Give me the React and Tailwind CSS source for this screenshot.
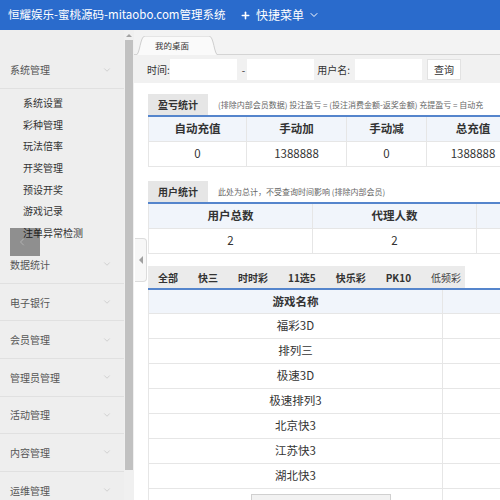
import { ChevronDown, ChevronLeft, Plus } from 'lucide-react'

const subs = ['系统设置', '彩种管理', '玩法倍率', '开奖管理', '预设开奖', '游戏记录', '注单异常检测']
const menus = ['数据统计', '电子银行', '会员管理', '管理员管理', '活动管理', '内容管理', '运维管理']
const tabs = ['全部', '快三', '时时彩', '11选5', '快乐彩', 'PK10', '低频彩']
const games = ['福彩3D', '排列三', '极速3D', '极速排列3', '北京快3', '江苏快3', '湖北快3']

function MenuRow({ label, tall }) {
  return (
    <div
      className={`flex items-center justify-between border-b border-[#e0e0e0] pl-[10px] pr-[12px] text-[10px] text-[#555] ${
        tall ? 'h-[38px]' : 'h-[37.6px]'
      }`}
    >
      <span>{label}</span>
      <ChevronDown size={10} strokeWidth={1.5} className="text-[#bdbdbd]" />
    </div>
  )
}

function SectionHead({ title, note }) {
  return (
    <div className="flex h-[23px] w-[640px] items-stretch border-b-2 border-[#5585cc]">
      <div className="flex items-center bg-[#e6e6e6] px-[10px] text-[10px] font-bold text-[#333]">{title}</div>
      <div className="flex items-center whitespace-nowrap pl-[10px] text-[8px] text-[#666]">{note}</div>
    </div>
  )
}

function Cell({ children, w, head, first }) {
  return (
    <div
      className={`flex shrink-0 items-center justify-center border-r border-b border-[#e6e6e6] text-[11.5px] text-[#333] ${
        head ? 'font-bold' : ''
      } ${first ? 'border-l' : ''}`}
      style={{ width: w }}
    >
      {children}
    </div>
  )
}

export default function App() {
  const profitCols = [99, 100, 80, 93, 120, 120]
  const profitHead = ['自动充值', '手动加', '手动减', '总充值', '', '']
  const profitVals = ['0', '1388888', '0', '1388888', '', '']
  const userCols = [165, 164, 160, 160]

  return (
    <div className="flex h-[500px] w-[500px] flex-col overflow-hidden bg-white font-['Noto_Sans_CJK_SC','Liberation_Sans',sans-serif]">
      <header className="flex h-[30px] shrink-0 items-center bg-[#2a6bcc] text-white">
        <span className="inline-block w-[240px] shrink-0 whitespace-nowrap pl-[8px] text-[11.5px]">恒耀娱乐-蜜桃源码-mitaobo.com管理系统</span>
        <div className="flex shrink-0 items-center text-[12px]">
          <Plus size={11} strokeWidth={3.5} />
          <span className="ml-[5px]">快捷菜单</span>
          <ChevronDown size={12} strokeWidth={2} className="ml-[4px]" />
        </div>
      </header>

      <div className="relative flex min-h-0 flex-1">
        <aside className="w-[124px] shrink-0 bg-[#eeeeee] pt-[21px]">
          <MenuRow label="系统管理" tall />
          <div className="py-[3px]">
            {subs.map((s) => (
              <div key={s} className="flex h-[21.6px] items-center pl-[23px] text-[10px] text-[#333]">
                {s}
              </div>
            ))}
          </div>
          {menus.map((m) => (
            <MenuRow key={m} label={m} />
          ))}
        </aside>

        <div className="flex w-[10px] shrink-0 flex-col items-center bg-[#f0f0f0] pt-[4px]">
          <div className="h-0 w-0 border-x-[3px] border-b-[3px] border-x-transparent border-b-[#a3a3a3]" />
          <div className="mt-[3px] h-[430px] w-[8px] bg-[#c1c1c1]" />
        </div>

        <main className="flex min-w-0 flex-1 flex-col overflow-hidden bg-white">
          <div className="flex h-[25px] shrink-0 items-end border-b border-[#d4d4d4] bg-[#f3f3f3]">
            <div className="relative -mb-px ml-[2px] h-[19px] w-[82px]">
              <svg className="absolute inset-0 h-full w-full" viewBox="0 0 82 19" preserveAspectRatio="none">
                <path d="M0 19 C4 19 4 0 9 0 L73 0 C78 0 78 19 82 19" fill="#fafafa" stroke="#cfcfcf" strokeWidth="1" />
              </svg>
              <span className="relative flex h-full items-center pl-[19px] text-[8.5px] text-[#333]">我的桌面</span>
            </div>
          </div>

          <div className="flex h-[28px] shrink-0 items-center bg-[#f1f1f1] pl-[13px] text-[10px] text-[#333]">
            <span>时间:</span>
            <input className="h-[21px] w-[67px] bg-white outline-none" />
            <span className="ml-[5px] mr-[2px]">-</span>
            <input className="h-[21px] w-[67px] bg-white outline-none" />
            <span className="ml-[3px]">用户名:</span>
            <input className="ml-[5px] h-[21px] w-[67px] bg-white outline-none" />
            <button className="ml-[5px] h-[21px] w-[34px] border border-[#e2e2e2] bg-white text-[10px] text-[#333]">查询</button>
          </div>

          <div className="pl-[14px] pt-[11px]">
            <SectionHead
              title="盈亏统计"
              note="(排除内部会员数据)  投注盈亏 = (投注消费金额-返奖金额)    充提盈亏 = 自动充"
            />
            <div className="flex h-[25px] bg-[#f1f5fb]">
              {profitCols.map((w, i) => (
                <Cell key={i} w={w} head first={i === 0}>
                  {profitHead[i]}
                </Cell>
              ))}
            </div>
            <div className="flex h-[25px]">
              {profitCols.map((w, i) => (
                <Cell key={i} w={w} first={i === 0}>
                  {profitVals[i]}
                </Cell>
              ))}
            </div>

            <div className="mt-[14px]">
              <SectionHead title="用户统计" note="此处为总计，不受查询时间影响 (排除内部会员)" />
            </div>
            <div className="flex h-[25px] bg-[#f1f5fb]">
              {userCols.map((w, i) => (
                <Cell key={i} w={w} head first={i === 0}>
                  {['用户总数', '代理人数', '', ''][i]}
                </Cell>
              ))}
            </div>
            <div className="flex h-[25px]">
              {userCols.map((w, i) => (
                <Cell key={i} w={w} first={i === 0}>
                  {['2', '2', '', ''][i]}
                </Cell>
              ))}
            </div>

            <div className="mt-[12px] w-[640px] border-b-2 border-[#5585cc]">
              <div className="flex h-[22px] w-[317px] items-center bg-[#ebebeb] text-[10px] text-[#333]">
                {tabs.map((t) => (
                  <span
                    key={t}
                    className={`shrink-0 whitespace-nowrap px-[10px] ${t === '低频彩' ? 'font-normal text-[#444]' : 'font-bold'}`}
                  >
                    {t}
                  </span>
                ))}
              </div>
            </div>
            <div className="flex h-[24px] bg-[#f1f5fb]">
              <Cell w={295} head first>
                游戏名称
              </Cell>
              <Cell w={300} head />
            </div>
            {games.map((g) => (
              <div key={g} className="flex h-[25px]">
                <Cell w={295} first>
                  {g}
                </Cell>
                <Cell w={300} />
              </div>
            ))}
            <div className="flex h-[25px]">
              <div className="w-[295px] shrink-0 border-x border-b border-[#e6e6e6] pt-[5px]">
                <div className="ml-[102px] h-[20px] w-[140px] border border-[#d0d0d0] bg-[#f2f2f2]" />
              </div>
              <Cell w={300} />
            </div>
          </div>
        </main>

        <div className="absolute left-[10px] top-[198px] flex h-[28px] w-[30px] items-center bg-black/40 pl-[6px]">
          <ChevronLeft size={12} strokeWidth={1.5} className="text-white/40" />
        </div>

        <div className="absolute left-[135px] top-[208px] flex h-[44px] w-[12px] items-center justify-center rounded-r-[4px] border border-l-0 border-[#dcdcdc] bg-[#f7f7f7]">
          <div className="h-0 w-0 border-y-[4px] border-r-[4px] border-y-transparent border-r-[#a0a0a0]" />
        </div>
      </div>
    </div>
  )
}
